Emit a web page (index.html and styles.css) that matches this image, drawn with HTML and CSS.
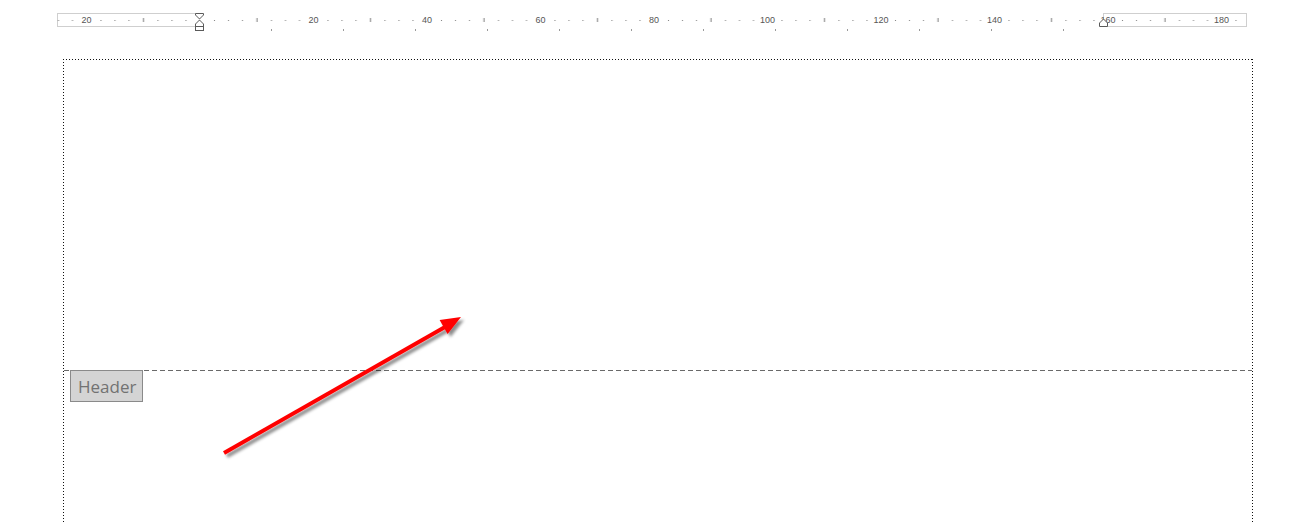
FILE: index.html
```html
<!DOCTYPE html>
<html>
<head>
<meta charset="utf-8">
<link rel="stylesheet" href="styles.css">
</head>
<body>
<div class="ruler-wrap">
  <div class="ruler">
    <div class="margin-box left-margin"></div>
    <div class="text-zone"></div>
    <div class="margin-box right-margin"></div>
    <svg class="ticks" width="1190" height="14" viewBox="0 0 1190 14">
      <defs>
        <pattern id="tk" x="143" y="0" width="113.5" height="14" patternUnits="userSpaceOnUse">
          <rect x="14" y="7" width="1" height="1" fill="#7a7a7a"/>
          <rect x="28" y="7" width="1" height="1" fill="#7a7a7a"/>
          <rect x="42" y="7" width="1" height="1" fill="#7a7a7a"/>
          <rect x="56.5" y="5" width="1" height="4" fill="#7a7a7a"/>
          <rect x="71" y="7" width="1" height="1" fill="#7a7a7a"/>
          <rect x="85" y="7" width="1" height="1" fill="#7a7a7a"/>
          <rect x="99" y="7" width="1" height="1" fill="#7a7a7a"/>
        </pattern>
      </defs>
      <rect x="0" y="0" width="1190" height="14" fill="url(#tk)"/>
    </svg>
    <div class="labels">
      <span class="lbl">20</span>
      <span class="lbl"></span>
      <span class="lbl">20</span>
      <span class="lbl">40</span>
      <span class="lbl">60</span>
      <span class="lbl">80</span>
      <span class="lbl">100</span>
      <span class="lbl">120</span>
      <span class="lbl">140</span>
      <span class="lbl">160</span>
      <span class="lbl">180</span>
    </div>
    <svg class="marker left-indent" width="11" height="19" viewBox="0 0 11 19">
      <path d="M1.5 0.5 H9.5 V2 L5.5 6 L1.5 2 Z" fill="#fff" stroke="#5a5a5a"/>
      <path d="M5.5 7 L9.5 11 V13.5 H1.5 V11 Z" fill="#fff" stroke="#5a5a5a"/>
      <rect x="1.5" y="13.5" width="8" height="4" fill="#fff" stroke="#5a5a5a"/>
    </svg>
    <svg class="marker right-indent" width="11" height="14" viewBox="0 0 11 14">
      <path d="M5.5 6 L9.5 10 V13.5 H1.5 V10 Z" fill="#fff" stroke="#5a5a5a"/>
    </svg>
  </div>
  <div class="tabs"></div>
</div>

<div class="page">
  <div class="header-space"></div>
  <div class="header-rule"></div>
  <div class="header-tag">Header</div>
  <svg class="arrow" width="1190" height="463" viewBox="0 0 1190 463">
    <defs>
      <filter id="sh" x="-10%" y="-10%" width="130%" height="140%">
        <feDropShadow dx="3" dy="3" stdDeviation="1.6" flood-color="#000" flood-opacity="0.45"/>
      </filter>
    </defs>
    <g filter="url(#sh)">
      <line x1="161" y1="394" x2="382" y2="268" stroke="#ff0000" stroke-width="4"/>
      <polygon points="398,258 384.6,274.9 376.6,261.1" fill="#ff0000"/>
    </g>
  </svg>
</div>
</body>
</html>
```
FILE: styles.css
```css
html, body {
  margin: 0;
  padding: 0;
  background: #ffffff;
  overflow: hidden;
}

body {
  width: 1289px;
  height: 522px;
  font-family: "Liberation Sans", Arial, sans-serif;
}

.ruler-wrap {
  padding-top: 13px;
  margin-left: 57px;
  width: 1190px;
}

.ruler {
  position: relative;
  display: flex;
  width: 1190px;
  height: 14px;
}

.margin-box {
  box-sizing: border-box;
  height: 14px;
  border: 1px solid #cfcfcf;
  background: #fff;
}

.left-margin {
  width: 143px;
}

.text-zone {
  width: 903px;
  height: 14px;
}

.right-margin {
  width: 144px;
}

.ticks {
  position: absolute;
  left: 0;
  top: 0;
}

.labels {
  position: absolute;
  top: 0;
  left: -27.25px;
  display: flex;
  height: 14px;
}

.lbl {
  width: 113.5px;
  flex: none;
  text-align: center;
  font-size: 9px;
  line-height: 14px;
  color: #555;
}

.marker {
  position: absolute;
  display: block;
}

.left-indent {
  left: 137px;
  top: 0;
}

.right-indent {
  left: 1040.5px;
  top: 0;
}

.tabs {
  margin-left: 143px;
  width: 903px;
  height: 4px;
  background-image: linear-gradient(to right, transparent 71px, #9a9a9a 71px, #9a9a9a 72px, transparent 72px);
  background-size: 72px 2px;
  background-position: 0 2px;
  background-repeat: repeat-x;
}

.page {
  position: relative;
  margin-top: 28px;
  margin-left: 63px;
  width: 1190px;
  height: 480px;
  background:
    linear-gradient(to right, #111 1px, transparent 1px) 0 0 / 3px 1px repeat-x,
    linear-gradient(to bottom, #111 1px, transparent 1px) 0 0 / 1px 3px repeat-y,
    linear-gradient(to bottom, #111 1px, transparent 1px) 100% 0 / 1px 3px repeat-y;
}

.header-space {
  height: 311px;
}

.header-rule {
  height: 1px;
  margin: 0 1px;
  background: linear-gradient(to right, #6a6a6a 5px, transparent 5px) 0 0 / 8px 1px repeat-x;
}

.header-tag {
  box-sizing: border-box;
  margin-top: -1px;
  margin-left: 7px;
  width: 73px;
  height: 32px;
  border: 1px solid #8a8a8a;
  background: #d4d4d4;
  color: #727272;
  font-family: "Open Sans", "Noto Sans", sans-serif;
  font-size: 17px;
  line-height: 31px;
  padding-left: 7px;
}

.arrow {
  position: absolute;
  left: 0;
  top: 0;
  overflow: visible;
}
```
